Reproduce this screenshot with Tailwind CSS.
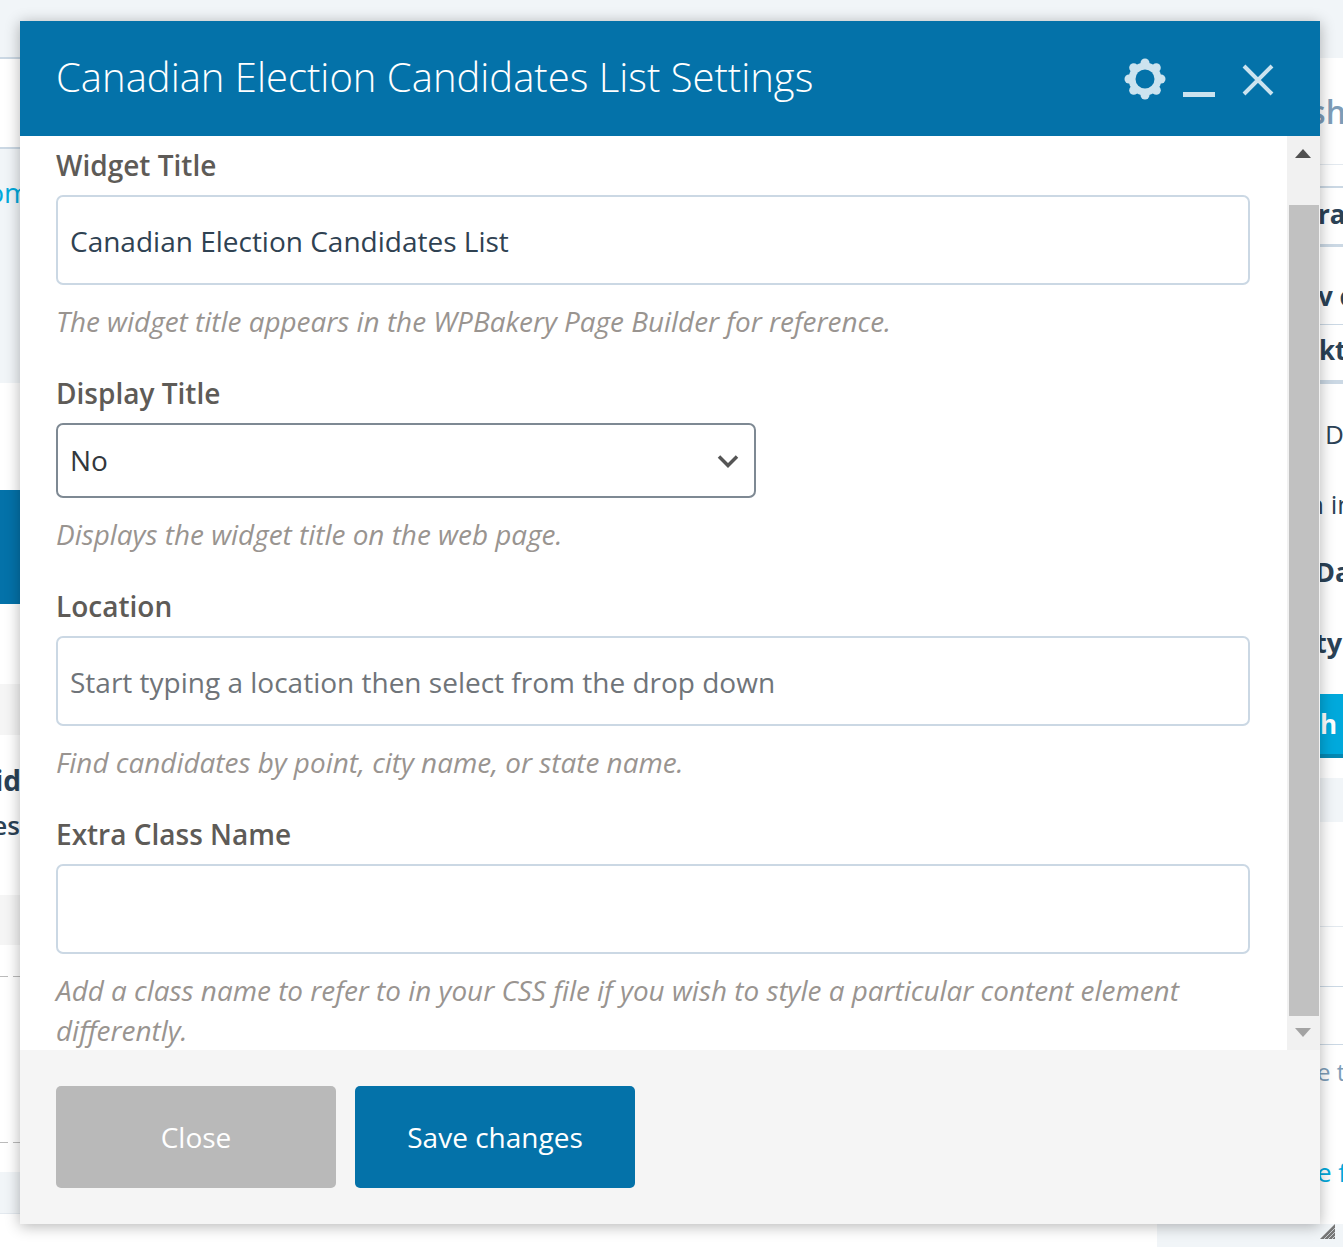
<!DOCTYPE html>
<html lang="en">
<head>
    <meta charset="UTF-8">
    <title>Canadian Election Candidates List Settings</title>
    <script src="https://cdn.jsdelivr.net/npm/@tailwindcss/browser@4"></script>
</head>
<body class="bg-white font-['Open_Sans',sans-serif]">
    <div class="relative w-[1343px] h-[1247px] overflow-hidden bg-white">

        <!-- page behind the dialog -->
        <div class="absolute left-0 top-0 w-[1343px] h-[58px] bg-[#f1f5f8]"></div>

        <div class="absolute left-0 top-0 w-[20px] h-[1247px] overflow-hidden">
            <div class="absolute left-0 top-[57px] w-full h-[2px] bg-[#cbd8e4]"></div>
            <div class="absolute left-0 top-[147px] w-full h-[236px] bg-[#f1f5f8] border-t-2 border-[#cbd8e4]"></div>
            <div class="absolute right-[-10px] top-[173px] text-[28px] leading-[38px] text-[#00a9dc]">om</div>
            <div class="absolute left-0 top-[490px] w-full h-[114px] bg-[#0472a9]"></div>
            <div class="absolute left-0 top-[684px] w-full h-[51px] bg-[#f5f5f5]"></div>
            <div class="absolute right-[-1px] top-[761px] text-[28px] leading-[38px] font-bold text-[#2b4256]">id</div>
            <div class="absolute right-0 top-[808px] text-[26px] leading-[34px] font-semibold text-[#2b4256]">es</div>
            <div class="absolute left-0 top-[895px] w-full h-[50px] bg-[#f5f5f5]"></div>
            <div class="absolute left-0 top-[976px] w-full h-px bg-[repeating-linear-gradient(90deg,#bbbbbb_0,#bbbbbb_8px,transparent_8px,transparent_13px)]"></div>
            <div class="absolute left-0 top-[1142px] w-full h-px bg-[repeating-linear-gradient(90deg,#bbbbbb_0,#bbbbbb_8px,transparent_8px,transparent_13px)]"></div>
            <div class="absolute left-0 top-[1172px] w-full h-[42px] bg-[#f1f5f8] border-b border-[#e3e9ef]"></div>
        </div>

        <div class="absolute left-[1320px] top-0 w-[23px] h-[1247px] overflow-hidden">
            <div class="absolute right-[-3px] top-[90px] text-[32px] leading-[44px] font-semibold text-[#7d9db8]">sh</div>
            <div class="absolute left-0 top-[164px] w-full h-px bg-[#e3e9ef]"></div>
            <div class="absolute left-0 top-[186px] w-full h-[2px] bg-[#cbd8e4]"></div>
            <div class="absolute left-[-2px] top-[197px] text-[26px] leading-[34px] font-bold text-[#2b4256]">ra</div>
            <div class="absolute left-0 top-[244px] w-full h-[3px] bg-[#cbd8e4]"></div>
            <div class="absolute left-[-2px] top-[279px] text-[26px] leading-[34px] font-bold text-[#2b4256] whitespace-nowrap">v c</div>
            <div class="absolute left-0 top-[324px] w-full h-px bg-[#cbd8e4]"></div>
            <div class="absolute left-[-1px] top-[333px] text-[26px] leading-[34px] font-bold text-[#2b4256]">kt</div>
            <div class="absolute left-0 top-[380px] w-full h-[4px] bg-[#cbd8e4]"></div>
            <div class="absolute left-[5px] top-[417px] text-[26px] leading-[34px] text-[#2b4256]">D</div>
            <div class="absolute left-[-12px] top-[487px] text-[26px] leading-[34px] text-[#2b4256] whitespace-nowrap">n in</div>
            <div class="absolute left-[-5px] top-[555px] text-[27px] leading-[34px] font-bold text-[#2b4256]">Da</div>
            <div class="absolute left-[-5px] top-[626px] text-[27px] leading-[34px] font-bold text-[#2b4256]">ty</div>
            <div class="absolute left-0 top-[694px] w-full h-[64px] bg-[#00a9dc] border-b-4 border-[#0488b2] text-white text-[26px] leading-[60px] font-bold">h</div>
            <div class="absolute left-0 top-[778px] w-full h-[44px] bg-[#f1f5f8]"></div>
            <div class="absolute left-0 top-[926px] w-full h-px bg-[#e3e9ef]"></div>
            <div class="absolute left-0 top-[986px] w-full h-px bg-[#cbd8e4]"></div>
            <div class="absolute left-0 top-[1044px] w-full h-px bg-[#cbd8e4]"></div>
            <div class="absolute left-[-3px] top-[1056px] text-[24px] leading-[32px] text-[#7d9db8] whitespace-nowrap">e t</div>
            <div class="absolute left-[-3px] top-[1155px] text-[26px] leading-[34px] text-[#00a9dc] whitespace-nowrap">e f</div>
        </div>

        <div class="absolute left-[1157px] top-[1224px] w-[186px] h-[23px] bg-[#f1f5f8]"></div>
        <svg class="absolute left-[1320px] top-[1224px]" width="16" height="16" viewBox="0 0 16 16">
            <path d="M0 15 L15 0 L15 15 Z" fill="#777777"/>
            <path d="M4 15 L15 4 M8 15 L15 8 M12 15 L15 12" stroke="#c8ccd0" stroke-width="1"/>
        </svg>

        <!-- dialog -->
        <div class="absolute left-[20px] top-[21px] w-[1300px] h-[1203px] flex flex-col bg-white shadow-[0_2px_14px_rgba(0,0,0,0.3)]">
            <div class="h-[115px] shrink-0 flex items-center justify-between bg-[#0472a9] pl-[36px] pr-[46px]">
                <h2 class="text-[40px] font-light text-white leading-none whitespace-nowrap mt-[-3px]">Canadian Election Candidates List Settings</h2>
                <div class="flex items-center text-[#cce3ef]">
                    <svg class="w-[42px] h-[42px]" viewBox="-21 -21 42 42">
                        <g fill="#cce3ef">
                            <circle r="16.500"/>
                            <circle cx="0" cy="-16" r="4.500"/>
                            <circle cx="11.300" cy="-11.300" r="4.500"/>
                            <circle cx="16" cy="0" r="4.500"/>
                            <circle cx="11.300" cy="11.300" r="4.500"/>
                            <circle cx="0" cy="16" r="4.500"/>
                            <circle cx="-11.300" cy="11.300" r="4.500"/>
                            <circle cx="-16" cy="0" r="4.500"/>
                            <circle cx="-11.300" cy="-11.300" r="4.500"/>
                        </g>
                        <circle r="9.500" fill="#0472a9"/>
                    </svg>
                    <div class="w-[32px] h-[5px] bg-[#cce3ef] ml-[17px] mt-[32px]"></div>
                    <svg class="w-[32px] h-[32px] ml-[27px] mt-[2px]" viewBox="0 0 32 32" stroke="currentColor" stroke-width="4" fill="none">
                        <path d="M2 2 L30 30 M30 2 L2 30"/>
                    </svg>
                </div>
            </div>

            <div class="flex-1 min-h-0 flex">
                <div class="w-[1267px] pl-[36px] pr-[37px] overflow-hidden">
                    <label class="block mt-[10px] text-[28px] leading-[38px] font-semibold text-[#5e5b57]">Widget Title</label>
                    <div class="mt-[11px] h-[90px] w-[1194px] flex items-center px-[12px] pt-[1px] border-2 border-[#cbd8e4] rounded-[7px] text-[28px] text-[#2f4252]">Canadian Election Candidates List</div>
                    <p class="mt-[16px] text-[27.900px] leading-[40px] italic text-[#999490]">The widget title appears in the WPBakery Page Builder for reference.</p>

                    <label class="block mt-[33px] text-[28px] leading-[38px] font-semibold text-[#5e5b57]">Display Title</label>
                    <div class="mt-[11px] h-[75px] w-[700px] flex items-center justify-between pl-[12px] pr-[15px] border-2 border-[#7e8993] rounded-[7px] text-[28px] text-[#32373c]">
                        <span class="mt-[-1px]">No</span>
                        <svg width="22" height="14" viewBox="0 0 22 14" fill="none" stroke="#555555" stroke-width="3.500"><path d="M2 2.500 L11 11.500 L20 2.500"/></svg>
                    </div>
                    <p class="mt-[16px] text-[27.900px] leading-[40px] italic text-[#999490]">Displays the widget title on the web page.</p>

                    <label class="block mt-[33px] text-[28px] leading-[38px] font-semibold text-[#5e5b57]">Location</label>
                    <div class="mt-[11px] h-[90px] w-[1194px] flex items-center px-[12px] pt-[1px] border-2 border-[#cbd8e4] rounded-[7px] text-[28px] text-[#6f7479]">Start typing a location then select from the drop down</div>
                    <p class="mt-[16px] text-[27.900px] leading-[40px] italic text-[#999490]">Find candidates by point, city name, or state name.</p>

                    <label class="block mt-[33px] text-[28px] leading-[38px] font-semibold text-[#5e5b57]">Extra Class Name</label>
                    <div class="mt-[11px] h-[90px] w-[1194px] border-2 border-[#cbd8e4] rounded-[7px]"></div>
                    <p class="mt-[16px] text-[27.900px] leading-[40px] italic text-[#999490]">Add a class name to refer to in your CSS file if you wish to style a particular content element differently.</p>
                </div>

                <div class="relative w-[33px] bg-[#f1f1f1]">
                    <div class="absolute left-[8px] top-[13px] w-0 h-0 border-x-[8px] border-x-transparent border-b-[9px] border-b-[#505050]"></div>
                    <div class="absolute left-[2px] top-[69px] w-[30px] h-[811px] bg-[#c1c1c1]"></div>
                    <div class="absolute left-[8px] top-[892px] w-0 h-0 border-x-[8px] border-x-transparent border-t-[9px] border-t-[#a3a3a3]"></div>
                </div>
            </div>

            <div class="h-[174px] shrink-0 flex items-start gap-[19px] bg-[#f5f5f5] pl-[36px] pt-[36px]">
                <button class="w-[280px] h-[102px] rounded-[5px] bg-[#b9b9b9] text-[28px] text-white">Close</button>
                <button class="w-[280px] h-[102px] rounded-[5px] bg-[#0472a9] text-[28px] text-white">Save changes</button>
            </div>
        </div>
    </div>
</body>
</html>
